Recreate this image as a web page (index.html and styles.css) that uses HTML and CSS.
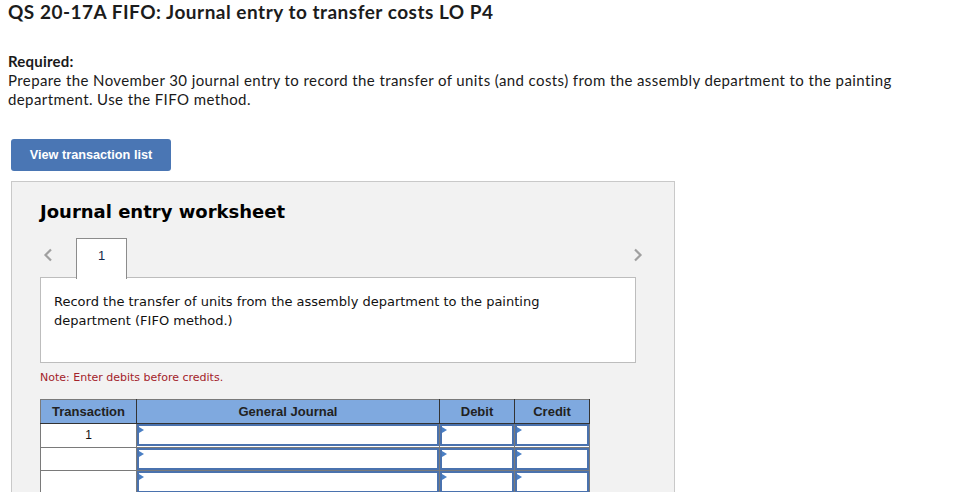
FILE: index.html
```html
<!DOCTYPE html>
<html lang="en">
<head>
<meta charset="utf-8">
<title>QS 20-17A FIFO</title>
<link rel="stylesheet" href="styles.css">
</head>
<body>
<h1 class="title">QS 20-17A FIFO: Journal entry to transfer costs LO P4</h1>
<div class="required">
  <div class="req-label">Required:</div>
  <div class="req-text">Prepare the November 30 journal entry to record the transfer of units (and costs) from the assembly department to the painting department. Use the FIFO method.</div>
</div>
<button class="btn" type="button">View transaction list</button>
<div class="panel">
  <h2 class="ws-title">Journal entry worksheet</h2>
  <div class="tabrow">
    <span class="arrow arrow-left"><svg width="10" height="14" viewBox="0 0 10 14"><path d="M8 1.5 L2.5 7 L8 12.5" fill="none" stroke="#a0a0a0" stroke-width="2.2"/></svg></span>
    <span class="tab">1</span>
    <span class="spacer"></span>
    <span class="arrow arrow-right"><svg width="10" height="14" viewBox="0 0 10 14"><path d="M2 1.5 L7.5 7 L2 12.5" fill="none" stroke="#a0a0a0" stroke-width="2.2"/></svg></span>
  </div>
  <div class="desc">Record the transfer of units from the assembly department to the painting department (FIFO method.)</div>
  <div class="note">Note: Enter debits before credits.</div>
  <table class="journal">
    <colgroup>
      <col class="c-tr"><col class="c-gj"><col class="c-dr"><col class="c-cr">
    </colgroup>
    <thead>
      <tr><th>Transaction</th><th>General Journal</th><th>Debit</th><th>Credit</th></tr>
    </thead>
    <tbody>
      <tr><td class="tr">1</td><td><div class="inp"></div></td><td><div class="inp"></div></td><td><div class="inp"></div></td></tr>
      <tr><td class="tr"></td><td><div class="inp"></div></td><td><div class="inp"></div></td><td><div class="inp"></div></td></tr>
      <tr><td class="tr"></td><td><div class="inp"></div></td><td><div class="inp"></div></td><td><div class="inp"></div></td></tr>
      <tr><td class="tr"></td><td><div class="inp"></div></td><td><div class="inp"></div></td><td><div class="inp"></div></td></tr>
    </tbody>
  </table>
</div>
</body>
</html>
```
FILE: styles.css
```css
html, body {
  margin: 0;
  padding: 0;
  overflow: hidden;
  background: #fff;
}
body {
  padding: 0 8px;
  font-family: Lato, "Liberation Sans", sans-serif;
  color: #1a1a1a;
}
.title {
  margin: 0;
  font-size: 19px;
  line-height: 24px;
  font-weight: 700;
  letter-spacing: 0.5px;
  color: #1c1c1c;
}
.required {
  margin-top: 28px;
  font-size: 15px;
  line-height: 19px;
  letter-spacing: 0.4px;
}
.req-label {
  font-weight: 700;
  letter-spacing: 0.2px;
}
.btn {
  display: block;
  margin: 30px 0 0 3px;
  width: 160px;
  height: 32px;
  border: 0;
  border-radius: 3px;
  background: #4a76b4;
  color: #fff;
  font-family: "Liberation Sans", Arial, sans-serif;
  font-weight: 700;
  font-size: 12.7px;
  padding: 0;
}
.panel {
  margin: 10px 0 0 3px;
  width: 606px;
  height: 400px;
  border: 1px solid #c9c9c9;
  background: #f2f2f2;
  padding: 18px 28px 0 28px;
  font-family: "DejaVu Sans", Verdana, sans-serif;
  color: #000;
}
.ws-title {
  margin: 0;
  font-size: 18px;
  line-height: 24px;
  font-weight: 700;
}
.tabrow {
  display: flex;
  align-items: center;
  margin-top: 14px;
  height: 40px;
  position: relative;
  z-index: 1;
  margin-bottom: -1px;
}
.arrow {
  display: flex;
  align-items: center;
  height: 40px;
}
.arrow-left {
  width: 36px;
  padding-left: 3px;
  box-sizing: border-box;
  margin-top: -6px;
}
.arrow-right {
  padding-right: 3px;
  margin-top: -6px;
}
.spacer {
  flex: 1;
}
.tab {
  box-sizing: border-box;
  width: 51px;
  height: 41px;
  align-self: flex-start;
  border: 1px solid #8c8c8c;
  border-bottom: 0;
  background: #fff;
  text-align: center;
  font-family: "Liberation Sans", Arial, sans-serif;
  font-size: 13px;
  line-height: 34px;
  color: #14284b;
}
.desc {
  box-sizing: border-box;
  width: 596px;
  height: 86px;
  border: 1px solid #bdbdbd;
  background: #fff;
  padding: 14px 60px 0 13px;
  font-size: 13px;
  line-height: 19px;
  color: #111;
}
.note {
  margin-top: 8px;
  font-size: 11px;
  line-height: 14px;
  color: #a3222a;
}
.journal {
  margin-top: 14px;
  border-collapse: collapse;
  table-layout: fixed;
  width: 549px;
  font-family: "Liberation Sans", Arial, sans-serif;
}
.c-tr { width: 96px; }
.c-gj { width: 303px; }
.c-dr { width: 75px; }
.c-cr { width: 75px; }
.journal th {
  background: #7fa9df;
  height: 23px;
  padding: 0;
  border: 1px solid #333;
  border-top-color: #7a7a7a;
  font-size: 13px;
  font-weight: 700;
  color: #222;
  text-align: center;
}
.journal th:first-child {
  border-left-color: #7a7a7a;
}
.journal td {
  height: 22px;
  padding: 0;
  border: 1px solid #7a7a7a;
  background: #fff;
  vertical-align: top;
}
.journal td.tr {
  text-align: center;
  font-size: 12px;
  line-height: 23px;
  color: #111;
}
.inp {
  position: relative;
  box-sizing: border-box;
  height: 22px;
  border: 2px solid #4a72ae;
  background: #fff;
}
.inp::before {
  content: "";
  position: absolute;
  left: 0;
  top: 1px;
  border-style: solid;
  border-width: 3px 0 3px 5px;
  border-color: transparent transparent transparent #4a7fc4;
}
```
